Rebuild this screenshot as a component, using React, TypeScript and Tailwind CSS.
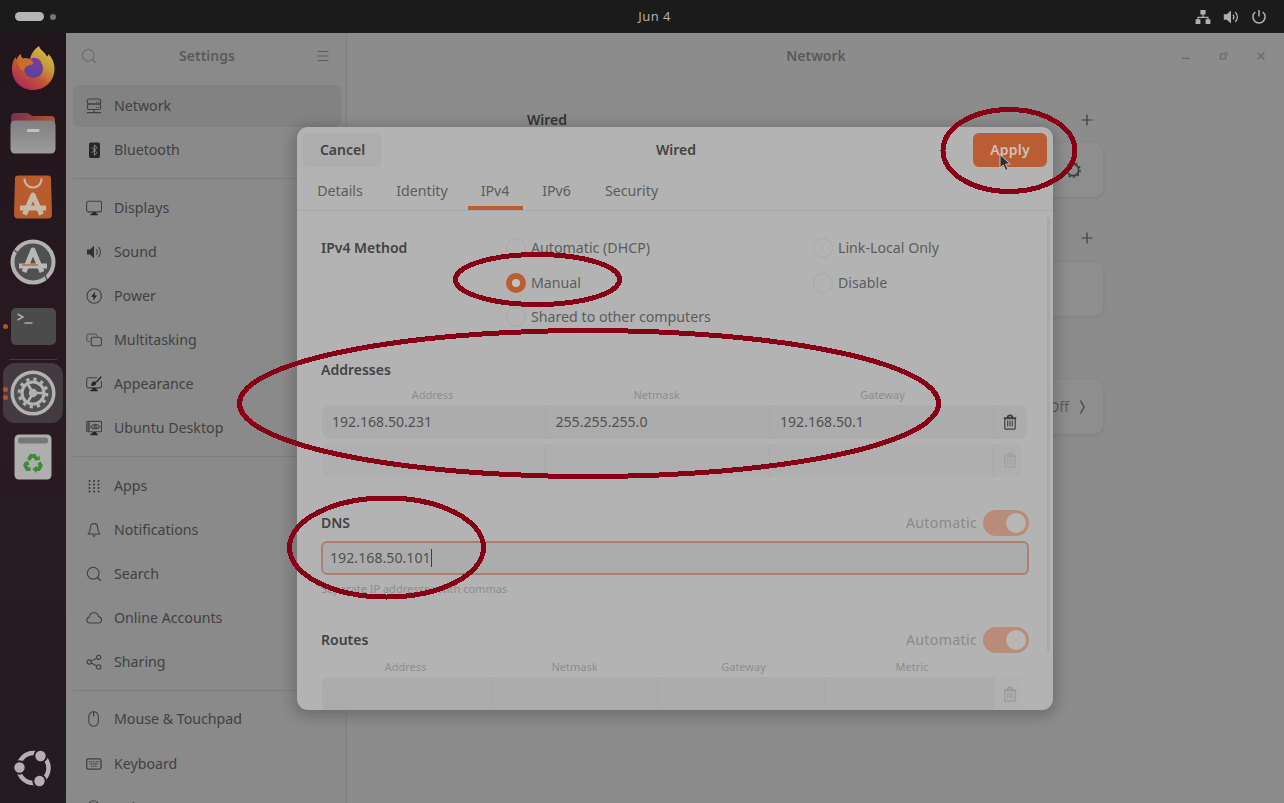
import type { ReactNode } from 'react';

type IconProps = { children: ReactNode; size?: number };

function Sym({ children, size = 16 }: IconProps) {
  return (
    <svg width={size} height={size} viewBox="0 0 16 16" fill="none" stroke="currentColor" strokeWidth="1.1" className="shrink-0">
      {children}
    </svg>
  );
}

const icons: Record<string, ReactNode> = {
  Network: (
    <>
      <rect x="1.3" y="1" width="13.4" height="5" rx="2" />
      <path d="M3.200 6h9.600a1.900 1.900 0 0 1 1.900 1.900v1.700a1.900 1.900 0 0 1-1.900 1.900H3.200a1.900 1.900 0 0 1-1.900-1.900V7.900A1.900 1.900 0 0 1 3.200 6z" />
      <path d="M8 11.500v2.800M1 14.600h14" />
      <path d="M10 4h1M12 4h1M10 9.500h1M12 9.500h1" />
    </>
  ),
  Bluetooth: (
    <>
      <rect x="3" y="0.5" width="11" height="15.5" rx="1.8" fill="#262626" stroke="none" />
      <path d="M5.8 5.4l5.200 5.200-2.600 2.600V3l2.600 2.600-5.200 5.200" stroke="#8a8a8a" strokeWidth="1" />
    </>
  ),
  Displays: (
    <>
      <rect x="0.6" y="1.3" width="15" height="10.6" rx="1.8" />
      <path d="M6.5 12.2h3.600l.5 1.600h1.200v1.400H4.400v-1.400H6z" fill="#262626" stroke="none" />
    </>
  ),
  Sound: (
    <>
      <path d="M1 5.4h3L8 1.800v12.400l-4-3.600H1z" fill="#303030" stroke="none" />
      <path d="M10.3 5.4c1.200 1.500 1.200 3.700 0 5.200M12.5 3.200c2.600 2.700 2.600 6.900 0 9.600" />
    </>
  ),
  Power: (
    <>
      <circle cx="8.2" cy="8" r="7.2" />
      <path d="M9.200 3.400L5.200 8.800h2.400l-.6 4 4-5.400H8.600z" fill="#262626" stroke="none" />
    </>
  ),
  Multitasking: (
    <>
      <path d="M3.600 9.400H2.400A1.600 1.600 0 0 1 .8 7.800V3.600A1.600 1.600 0 0 1 2.400 2h6.800a1.600 1.600 0 0 1 1.600 1.600v.8" strokeWidth=".8" />
      <rect x="5.200" y="5.200" width="10.200" height="8.600" rx="2" />
    </>
  ),
  Appearance: (
    <>
      <path d="M11 1.700H2.400A1.700 1.700 0 0 0 .7 3.400v6.800a1.700 1.700 0 0 0 1.700 1.700h11.400a1.700 1.700 0 0 0 1.700-1.700V5" />
      <path d="M15.200.8L10.400 6" stroke="#262626" strokeWidth="1.500" />
      <path d="M5.200 10c0-2.400.8-4.200 2.600-4.600 1.500-.2 2.600.8 2.500 2.200-.2 1.800-2.400 2.600-5.100 2.400zM6.500 12h3.600l.5 1.800h1.200v1.400H4.400v-1.400H6z" fill="#262626" stroke="none" />
    </>
  ),
  'Ubuntu Desktop': (
    <>
      <rect x="0.700" y="1.400" width="14.800" height="10.400" rx="1" />
      <path d="M3 1.400v10.400M1 4.200h2M1 6.800h2M1 9.400h2" strokeWidth="1.300" />
      <path d="M4.800 6.600c2-3.200 6.800-3.200 8.800 0-2 3.200-6.800 3.200-8.800 0z" />
      <circle cx="9.200" cy="6.600" r="1.200" />
      <path d="M6.500 12h3.600l.5 1.800h1.200v1.400H4.400v-1.400H6z" fill="#262626" stroke="none" />
    </>
  ),
  Apps: (
    <g fill="#2c2c2c" stroke="none">
      {[3, 6.500, 10, 13.500].map((y) => [3.500, 8, 12.500].map((x) => <rect key={`${x}-${y}`} x={x - 0.8} y={y - 0.8} width="1.600" height="1.600" />))}
    </g>
  ),
  Notifications: (
    <>
      <path d="M8 1.600c-2.500 0-3.700 1.900-3.700 4.200 0 3.200-.8 4.700-2 6.200h11.400c-1.200-1.500-2-3-2-6.200 0-2.300-1.200-4.200-3.700-4.200z" />
      <path d="M6.200 13.200h3.600L8 15.200z" fill="currentColor" stroke="none" />
    </>
  ),
  Search: (
    <>
      <circle cx="7.200" cy="7.200" r="5.900" />
      <path d="M11.500 11.500l3.200 3.200" strokeWidth="1.400" />
    </>
  ),
  'Online Accounts': <path d="M3.800 13A3 3 0 0 1 .8 10.200c0-1.600 1-2.700 2.500-2.900C3.500 4.600 5.500 2.800 8 2.800c2.300 0 4 1.500 4.500 3.800 1.900.2 3.100 1.500 3.100 3.200 0 1.900-1.300 3.200-3.100 3.200z" />,
  Sharing: (
    <>
      <circle cx="3.200" cy="8" r="2.100" />
      <circle cx="12.700" cy="3.300" r="2.100" />
      <circle cx="12.700" cy="12.900" r="2.100" />
      <path d="M5.200 7l5.500-2.700M5.200 9l5.500 2.900" />
    </>
  ),
  'Mouse & Touchpad': (
    <>
      <path d="M7.600.8C4.500.8 3 2.800 2.800 6v3.600c0 3.600 1.800 5.600 4.800 5.600s4.800-2 4.800-5.600V6C12.200 2.800 10.700.8 7.600.8z" />
      <path d="M7.600.8v4.600" strokeWidth="1.300" />
    </>
  ),
  Keyboard: (
    <>
      <rect x="0.700" y="2.800" width="14.300" height="10.400" rx="1.800" strokeWidth="1.300" />
      <path d="M2.800 5.800h10.200M3.500 7.900h9M5 10.200h6" strokeDasharray="1.200 .6" />
    </>
  ),
  Color: <circle cx="7.600" cy="6" r="5.200" />,
};

const groups: string[][] = [
  ['Network', 'Bluetooth'],
  ['Displays', 'Sound', 'Power', 'Multitasking', 'Appearance', 'Ubuntu Desktop'],
  ['Apps', 'Notifications', 'Search', 'Online Accounts', 'Sharing'],
  ['Mouse & Touchpad', 'Keyboard', 'Color'],
];

function TopBar() {
  return (
    <header className="grid h-[33px] shrink-0 grid-cols-3 items-center bg-[#1b1b1b] text-[#b0b0b0]">
      <div className="flex items-center gap-1.5 pl-[15px]">
        <span className="h-[9px] w-[29px] rounded-full bg-[#b5b5b5]" />
        <span className="h-1.5 w-1.5 rounded-full bg-[#777]" />
      </div>
      <div className="pb-[2px] pl-[25px] text-center text-[13px] leading-4 tracking-[0.4px]">Jun 4</div>
      <div className="flex items-center justify-end gap-[12px] pr-[17px]">
        <svg width="16" height="16" viewBox="0 0 16 16" fill="currentColor">
          <path d="M5.400 1h5.200v4.600H8.600v2.200h5v2.400h1.800V15h-4.800v-4.800h1.800V9H3.600v1.200h1.800V15H.6v-4.800h1.800V7.800h5V5.600h-2z" />
        </svg>
        <svg width="16" height="16" viewBox="0 0 16 16" fill="none" stroke="currentColor" strokeWidth="1.300">
          <path d="M.8 5.200h3L8 1.600v12.800l-4.200-3.600h-3z" fill="currentColor" stroke="none" />
          <path d="M10 5.600c1.100 1.400 1.100 3.400 0 4.800M12.200 3c2.900 2.900 2.900 7.100 0 10" />
        </svg>
        <svg width="16" height="16" viewBox="0 0 16 16" fill="none" stroke="currentColor" strokeWidth="1.500">
          <path d="M4.300 3a6.100 6.100 0 1 0 7.400 0M8 1v6.600" />
        </svg>
      </div>
    </header>
  );
}

function FirefoxIcon() {
  return (
    <svg width="46" height="46" viewBox="0 0 46 46">
      <defs>
        <linearGradient id="fox" x1="0.850" y1="0.100" x2="0.250" y2="0.950">
          <stop offset="0" stopColor="#c9bd49" />
          <stop offset=".35" stopColor="#c99238" />
          <stop offset=".65" stopColor="#c25232" />
          <stop offset="1" stopColor="#ae2b5c" />
        </linearGradient>
        <radialGradient id="globe" cx=".6" cy=".3" r=".8">
          <stop offset="0" stopColor="#7d3b9e" />
          <stop offset="1" stopColor="#50449c" />
        </radialGradient>
      </defs>
      <path d="M29 0c1 4 6 6 8 10.500 1-.5 1.500-1.500 1.500-2.500C42.500 12 44.500 17 44.500 23 44.500 35 35 44 23 44S2 35 2 23c0-5 1-9 3.500-12 0 1 .5 2 1 2.500C7.500 11 9 9 11 8c-.2 2 .5 3.500 2 4.500 2.500-.5 5-.5 7 .5C21 8 24.500 3 29 0z" fill="url(#fox)" />
      <circle cx="23.500" cy="22.500" r="9.500" fill="url(#globe)" />
      <path d="M7 15c4-3 9-3 13-1.500 2 1.500 3.500 2.500 3.500 3.500-1 1.500-3 2-5 2.500-3 1-4.500 3-4.500 6-4-2-6-6-7-10.500z" fill="#c96c2e" />
      <path d="M20 13c5-3 10-.5 12 4-3-2-5.500-3-9-3z" fill="#7d3b9e" />
    </svg>
  );
}

function Dock() {
  const slot = 'relative flex h-[64.4px] shrink-0 items-center justify-center';
  return (
    <nav className="flex w-[66px] shrink-0 flex-col bg-linear-to-b from-[#21151c] via-[#2a1a21] to-[#241b23] pt-[4px]">
      <div className={slot}><FirefoxIcon /></div>
      <div className={`${slot} pb-[2px]`}>
        <svg width="46" height="42" viewBox="0 0 46 42">
          <defs>
            <linearGradient id="tab" x1="0" x2="1"><stop offset="0" stopColor="#76304f" /><stop offset="1" stopColor="#b5502c" /></linearGradient>
            <linearGradient id="drawer" x1="0" y1="0" x2="0" y2="1"><stop offset="0" stopColor="#808080" /><stop offset="1" stopColor="#9c9c9c" /></linearGradient>
          </defs>
          <path d="M1 5a4 4 0 0 1 4-4h12c3 0 3 3 6 3h18a4 4 0 0 1 4 4v12H1z" fill="url(#tab)" />
          <rect x="0.500" y="8.500" width="45" height="33" rx="4.500" fill="url(#drawer)" />
          <rect x="17" y="17" width="12.500" height="3" rx="1" fill="#c0c0c0" />
        </svg>
      </div>
      <div className={`${slot} pb-[2px]`}>
        <svg width="38" height="44" viewBox="0 0 38 44" fill="none">
          <path d="M4 .5h30a3 3 0 0 1 3 3l1 36a4 4 0 0 1-4 4H4a4 4 0 0 1-4-4l1-36a3 3 0 0 1 3-3z" fill="#b85c2e" />
          <path d="M10.500 3.500c0 12 17 12 17 0" stroke="#c5b9a8" strokeWidth="2" />
          <path d="M10.500 39.500L19 20l8.500 19.500M6 33h26" stroke="#c5b9a8" strokeWidth="5" strokeLinejoin="round" />
        </svg>
      </div>
      <div className={`${slot} pb-px`}>
        <svg width="46" height="46" viewBox="0 0 46 46" fill="none">
          <circle cx="23" cy="23" r="20.500" fill="#505050" stroke="#b2b2b2" strokeWidth="4" />
          <path d="M4 11l5 4M37 41l-2-5" stroke="#505050" strokeWidth="1.500" />
          <path d="M14 33L23 11l9 22" stroke="#b8b8b8" strokeWidth="5" strokeLinejoin="round" />
          <path d="M9 27h28" stroke="#b8b8b8" strokeWidth="5" />
          <path d="M12 26h16" stroke="#b85c35" strokeWidth="1.300" />
        </svg>
      </div>
      <div className={`${slot} pb-px`}>
        <span className="absolute left-[3px] h-[5px] w-[5px] rounded-full bg-[#b3502d]" />
        <svg width="45" height="37" viewBox="0 0 45 37" fill="none">
          <rect width="45" height="37" rx="5" fill="#4b4b4b" />
          <path d="M6.500 6l5.500 3-5.500 3M13.500 15h8" stroke="#adadad" strokeWidth="1.500" />
        </svg>
      </div>
      <div className="mx-[9px] h-px shrink-0 bg-[#463b41]" />
      <div className="relative mt-[3px] flex h-[61px] shrink-0 items-center justify-center">
        <span className="absolute inset-x-[3px] inset-y-[0.5px] rounded-[12px] bg-[#443b40]" />
        <span className="absolute left-[3px] flex flex-col gap-[3px]">
          <span className="h-[5px] w-[5px] rounded-full bg-[#b3502d]" />
          <span className="h-[5px] w-[5px] rounded-full bg-[#b3502d]" />
        </span>
        <svg width="46" height="46" viewBox="0 0 46 46" fill="none" className="relative">
          <circle cx="23" cy="23" r="20.800" fill="#505050" stroke="#b2b2b2" strokeWidth="3.500" />
          <circle cx="23" cy="23" r="11" stroke="#b2b2b2" strokeWidth="3.200" />
          <circle cx="23" cy="23" r="13.800" stroke="#b2b2b2" strokeWidth="3.200" strokeDasharray="3.200 4.025" />
          <circle cx="23" cy="23" r="4.200" fill="#b2b2b2" />
          <path d="M23 23h11M23 23l-5.500-9.500M23 23l-5.500 9.500" stroke="#b2b2b2" strokeWidth="2.600" />
        </svg>
      </div>
      <div className="relative mt-[2px] flex h-[63px] shrink-0 items-center justify-center">
        <svg width="38" height="46" viewBox="0 0 38 46" fill="none">
          <rect x=".5" y=".5" width="37" height="45" rx="4.500" fill="#aeaeae" />
          <rect x="4" y="3.500" width="30" height="6" rx="2.500" fill="#777" />
          <g stroke="#3f8b38" strokeWidth="3.800">
            <path d="M14.500 26l2.500-4h3.500l2.500 3.500M25 28.500l1.800 3-2 3.700H21.500M16.500 35.200h-3.300l-2-3.700 1.500-2.500" />
          </g>
          <path d="M20.500 26.500l5.500-.5-.5-4.500zM22.500 31.500l-4 3.700 4 3.700zM9.500 28.500l4.500-1.500 1.700 4.500z" fill="#3f8b38" />
        </svg>
      </div>
      <div className="mt-auto mb-[15px] flex justify-center">
        <svg width="40" height="40" viewBox="0 0 40 40" fill="none">
          <circle cx="20.500" cy="20" r="15" stroke="#b9adb4" strokeWidth="4.500" />
          <g fill="#b9adb4" stroke="#281c24" strokeWidth="2">
            <circle cx="6.500" cy="19.500" r="6.200" />
            <circle cx="27.500" cy="8" r="6.200" />
            <circle cx="26.500" cy="33" r="6.200" />
          </g>
        </svg>
      </div>
    </nav>
  );
}

function Sidebar() {
  return (
    <aside className="flex w-[281px] shrink-0 flex-col overflow-hidden border-r border-[#818181] bg-[#8a8a8a] text-[#414141]">
      <div className="flex h-[51px] shrink-0 items-center pr-[17px] pb-[5px] pl-[15px] text-[#6c6c6c]">
        <Sym>{icons.Search}</Sym>
        <h1 className="flex-1 text-center text-[14px] leading-5 font-semibold text-[#5a5a5a]">Settings</h1>
        <svg width="12" height="12" viewBox="0 0 12 12" stroke="#5c5c5c" strokeWidth="1.200"><path d="M.5 1.500h11M.5 6h11M.5 10.500h11" /></svg>
      </div>
      {groups.map((rows, g) => (
        <div key={g} className="flex shrink-0 flex-col">
          {g > 0 && <div className="mx-[7px] flex h-[13.2px] items-center"><div className="h-px w-full bg-[#7d7d7d]" /></div>}
          {rows.map((label) => (
            <div key={label} className="flex h-[44.150px] items-center px-[7px]">
              <div className={label === 'Network' ? 'flex h-[42px] w-[268px] shrink-0 items-center gap-3 rounded-[6px] bg-[#828282] pl-[13px]' : 'flex h-[42px] w-full items-center gap-3 pl-[13px]'}>
                <Sym>{icons[label]}</Sym>
                <span className="text-[14.2px] leading-5 whitespace-nowrap">{label}</span>
              </div>
            </div>
          ))}
        </div>
      ))}
    </aside>
  );
}

function Plus() {
  return <svg width="12" height="12" viewBox="0 0 12 12" stroke="#3c3c3c" strokeWidth="1.200"><path d="M6 .5v11M.5 6h11" /></svg>;
}

function NetworkPane() {
  const card = 'flex h-[54px] items-center justify-end rounded-[9px] bg-[#8e8e8e] shadow-[0_1px_3px_1px_rgba(0,0,0,0.06)]';
  return (
    <main className="flex min-w-0 flex-1 flex-col bg-[#8c8c8c] text-[#303030]">
      <div className="flex h-[46px] shrink-0 items-center pr-[16px]">
        <h2 className="flex-1 pl-[107px] text-center text-[14px] leading-5 font-semibold text-[#5a5a5a]">Network</h2>
        <div className="flex items-center gap-[24px] text-[#676767]">
          <svg width="14" height="14" viewBox="0 0 14 14" stroke="currentColor" strokeWidth="1.200"><path d="M4 9.300h8" /></svg>
          <svg width="14" height="14" viewBox="0 0 14 14" fill="none" stroke="currentColor" strokeWidth="1.200"><path d="M4.500 5h5v5h-5z" /><path d="M7.500 3.500h4v4" strokeWidth=".5" /></svg>
          <svg width="14" height="14" viewBox="0 0 14 14" stroke="currentColor" strokeWidth="1.300"><path d="M3.500 3.500l7 7M10.500 3.500l-7 7" /></svg>
        </div>
      </div>
      <div className="ml-[180px] flex w-[576px] flex-col pt-[31px]">
        <div className="flex h-[20px] items-center justify-between pr-[10px]">
          <h3 className="text-[14px] leading-5 font-semibold text-[#363636]">Wired</h3>
          <Plus />
        </div>
        <div className={`${card} mt-[13px] pr-[21px]`}>
          <svg width="18" height="18" viewBox="0 0 18 18" fill="none" stroke="#3c3c3c"><circle cx="9" cy="9" r="5.700" strokeWidth="1.700" /><circle cx="9" cy="9" r="7.200" strokeWidth="1.300" strokeDasharray="2.300 2.224" /></svg>
        </div>
        <div className="mt-[31px] flex h-[20px] items-center justify-end pr-[10px]">
          <Plus />
        </div>
        <div className={`${card} mt-[14px]`} />
        <div className={`${card} mt-[64px] gap-[9px] pr-[16px]`}>
          <span className="text-[14.2px] leading-5 text-[#5c5c5c]">Off</span>
          <svg width="9" height="14" viewBox="0 0 9 14" fill="none" stroke="#484848" strokeWidth="1.400"><path d="M2.500.5c1 3 3.500 5 3.500 6.500s-2.500 3.500-3.500 6.500" /></svg>
        </div>
      </div>
    </main>
  );
}

function Trash() {
  return (
    <svg width="14" height="17" viewBox="0 0 14 17" fill="none" stroke="currentColor">
      <path d="M1.800 5v9.200a1 1 0 0 0 1 1h8.400a1 1 0 0 0 1-1V5" strokeWidth="1.200" />
      <path d="M.8 4.200h12.400M4.700 3.400c0-1.600.5-2 2.300-2s2.300.4 2.300 2" strokeWidth="1.900" />
      <path d="M4.700 6.500v6M7 6.500v6M9.300 6.500v6" strokeWidth="1.100" />
    </svg>
  );
}

function Radio({ label, on = false }: { label: string; on?: boolean }) {
  return (
    <div className="flex h-[34.2px] items-center gap-[5px]">
      {on ? (
        <span className="h-[20px] w-[20px] rounded-full border-[6px] border-[#bb5d31] bg-[#c4c2c0]" />
      ) : (
        <span className="h-[20px] w-[20px] rounded-full border-[1.5px] border-[#a8a8a8]" />
      )}
      <span className="text-[14.2px] leading-5 whitespace-nowrap">{label}</span>
    </div>
  );
}

function Toggle() {
  return (
    <div className="flex items-center gap-[6px] text-[#8a8a8a]">
      <span className="text-[14.2px] leading-5 tracking-[0.3px]">Automatic</span>
      <span className="flex h-[26px] w-[46px] items-center justify-end rounded-full bg-[#b98b79] pr-[3px]">
        <span className="h-[20px] w-[20px] rounded-full bg-[#b7b6b5]" />
      </span>
    </div>
  );
}

const tabs = [
  { label: 'Details', box: 'w-[73px]' },
  { label: 'Identity', box: 'w-[79px]' },
  { label: 'IPv4', box: 'w-[55px]' },
  { label: 'IPv6', box: 'w-[56px]' },
  { label: 'Security', box: 'w-[82px]' },
];

function WiredDialog() {
  const title = 'text-[14px] font-semibold leading-5 text-[#424242]';
  const cell = 'flex items-center border-r border-[#a8a8a8] pl-[10px]';
  return (
    <section className="absolute top-[127px] left-[297px] flex h-[583px] w-[756px] flex-col overflow-hidden rounded-[11px] bg-[#b3b3b3] text-[#5c5c5c] shadow-[0_3px_14px_4px_rgba(0,0,0,0.2)]">
      <div className="flex h-[46px] shrink-0 items-center justify-between px-[6px]">
        <button className="h-[34px] w-[79px] rounded-[6px] bg-[#adadad] pb-px text-[14px] font-semibold text-[#424242]">Cancel</button>
        <h2 className={`${title} pr-[3px]`}>Wired</h2>
        <button className="h-[34px] w-[74px] rounded-[6px] bg-[#ba5d35] pb-px text-[14px] font-semibold tracking-[0.2px] text-[#cfc2ba]">Apply</button>
      </div>
      <nav className="flex h-[38px] shrink-0 gap-[6px] border-b border-[#a8a8a8] pl-[6.500px]">
        {tabs.map((t) => (
          <div key={t.label} className={`flex flex-col items-center ${t.box}`}>
            <span className="flex h-[33px] items-center pt-[3px] text-[14.2px] leading-5">{t.label}</span>
            {t.label === 'IPv4' && <span className="h-[4px] w-full bg-[#bb5d31]" />}
          </div>
        ))}
      </nav>
      <div className="flex min-h-0 flex-1">
        <div className="ml-[24px] flex w-[708px] flex-col">
          <div className="flex h-[124px] shrink-0 pt-[20.400px]">
            <h3 className={`${title} flex h-[34px] w-[185px] items-center`}>IPv4 Method</h3>
            <div className="w-[307px]">
              <Radio label="Automatic (DHCP)" />
              <Radio label="Manual" on />
              <Radio label="Shared to other computers" />
            </div>
            <div>
              <Radio label="Link-Local Only" />
              <Radio label="Disable" />
            </div>
          </div>
          <h3 className={`${title} mt-[25px]`}>Addresses</h3>
          <div className="mt-[7px] grid shrink-0 grid-cols-[223px_225px_227px] text-center text-[11px] leading-4 text-[#8d8d8d]">
            <span>Address</span><span>Netmask</span><span>Gateway</span>
          </div>
          <div className="mt-[2px] ml-px grid h-[34px] w-[705px] shrink-0 grid-cols-[223.5px_224.5px_224px_1fr] rounded-[8px] bg-[#acacac] text-[14.1px] text-[#505050]">
            <span className={cell}>192.168.50.231</span>
            <span className={cell}>255.255.255.0</span>
            <span className={cell}>192.168.50.1</span>
            <span className="flex items-center justify-center pr-[2px] text-[#3f3f3f]"><Trash /></span>
          </div>
          <div className="mt-[5px] ml-px grid h-[33px] w-[700px] shrink-0 grid-cols-[223.5px_224.5px_224px_1fr] rounded-[5px] bg-[#afafaf] text-[#a0a0a0]">
            <span className={cell} /><span className={cell} /><span className={cell} />
            <span className="flex items-center justify-center pl-[3px]"><Trash /></span>
          </div>
          <div className="mt-[33px] flex h-[26px] shrink-0 items-center justify-between">
            <h3 className={title}>DNS</h3>
            <Toggle />
          </div>
          <div className="mt-[5px] flex h-[34px] shrink-0 items-center rounded-[6px] border-2 border-[#a98072] bg-[#acacac] pl-[7px] text-[14.2px] text-[#505050]">
            192.168.50.101<span className="h-[18px] w-px bg-[#404040]" />
          </div>
          <p className="mt-[6px] shrink-0 text-[11px] leading-4 text-[#8d8d8d]">Separate IP addresses with commas</p>
          <div className="mt-[30px] flex h-[26px] shrink-0 items-center justify-between">
            <h3 className={title}>Routes</h3>
            <Toggle />
          </div>
          <div className="mt-[6px] grid shrink-0 grid-cols-[169px_169px_169px_168px] text-center text-[11px] leading-4 text-[#8d8d8d]">
            <span>Address</span><span>Netmask</span><span>Gateway</span><span>Metric</span>
          </div>
          <div className="mt-[2px] ml-px grid h-[34px] w-[700px] shrink-0 grid-cols-[169px_167px_167px_169px_1fr] rounded-[6px] bg-[#acacac] text-[#999999]">
            <span className={cell} /><span className={cell} /><span className={cell} /><span className={cell} />
            <span className="flex items-center justify-center bg-[#b1b1b1] pl-[3px]"><Trash /></span>
          </div>
        </div>
        <div className="mt-[6px] ml-[18px] h-[434px] w-[3px] rounded-full bg-[#a8a8a8]" />
      </div>
    </section>
  );
}

function Annotations() {
  return (
    <svg className="pointer-events-none absolute inset-0" width="1284" height="803" viewBox="0 0 1284 803" fill="none">
      <path d="M1000 154.500v13.500l3.200-3 2.500 5.500 2.400-1.100-2.500-5.300h4.500z" fill="#2e2e2e" stroke="#c8c8c8" strokeWidth="1" />
      <g stroke="#880015" strokeWidth="5" shapeRendering="crispEdges">
        <ellipse cx="1009" cy="150.500" rx="66" ry="41" />
        <ellipse cx="537.500" cy="279.500" rx="82" ry="25" />
        <ellipse cx="589" cy="403.500" rx="349.500" ry="73" />
        <ellipse cx="386.500" cy="547.500" rx="97" ry="49.500" />
      </g>
    </svg>
  );
}

export default function App() {
  return (
    <div className="relative flex h-[803px] w-[1284px] flex-col overflow-hidden bg-[#898989] font-['Noto_Sans','Open_Sans',sans-serif]">
      <TopBar />
      <div className="flex min-h-0 flex-1">
        <Dock />
        <Sidebar />
        <NetworkPane />
      </div>
      <WiredDialog />
      <Annotations />
    </div>
  );
}
